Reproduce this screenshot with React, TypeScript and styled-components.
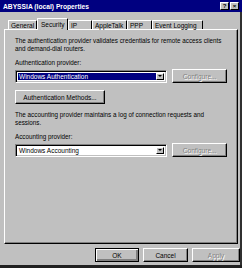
import React from 'react';
import styled, { createGlobalStyle } from 'styled-components';

const GlobalStyle = createGlobalStyle`
  html, body {
    margin: 0;
    padding: 0;
    background: #c0c0c0;
  }
  body {
    font-family: "Liberation Sans", Arial, sans-serif;
  }
`;

const Window = styled.div`
  width: 242px;
  height: 268px;
  box-sizing: border-box;
  background: #c0c0c0;
  display: flex;
  flex-direction: column;
  border-bottom: 3px solid #202020;
  font-size: 6.3px;
  color: #000;
  overflow: hidden;
`;

const TitleBar = styled.div`
  height: 12px;
  flex-shrink: 0;
  background: #000080;
  color: #fff;
  font-size: 6.7px;
  font-weight: bold;
  display: flex;
  align-items: center;
  justify-content: space-between;
  padding: 0 3px 0 3px;
`;

const TitleButtons = styled.div`
  display: flex;
  gap: 1px;
`;

const TitleButton = styled.div`
  width: 9px;
  height: 8px;
  box-sizing: border-box;
  background: #c0c0c0;
  border: 1px solid;
  border-color: #fff #000 #000 #fff;
  color: #000;
  font-size: 6px;
  font-weight: bold;
  line-height: 6px;
  text-align: center;
`;

const Body = styled.div`
  flex: 1;
  display: flex;
  flex-direction: column;
  border-right: 2px solid #303030;
`;

const TabStrip = styled.div`
  display: flex;
  align-items: flex-end;
  height: 11px;
  margin-top: 6px;
  padding-left: 8px;
`;

const Tab = styled.div<{ active?: boolean; w: number }>`
  width: ${p => p.w}px;
  height: ${p => (p.active ? 12 : 9)}px;
  box-sizing: border-box;
  padding-left: ${p => (p.active ? 3 : 2)}px;
  margin-bottom: ${p => (p.active ? -1 : 0)}px;
  border-top: 1px solid #fff;
  border-left: 1px solid #fff;
  border-right: 1px solid #000;
  border-radius: 1px 1px 0 0;
  background: #c0c0c0;
  display: flex;
  align-items: center;
  font-size: 6.5px;
  white-space: nowrap;
  position: relative;
  z-index: ${p => (p.active ? 1 : 0)};
`;

const Panel = styled.div`
  height: 215px;
  box-sizing: border-box;
  margin: 0 2px 0 4px;
  border: 1px solid;
  border-color: #fff #000 #000 #fff;
  box-shadow: inset -1px -1px 0 #808080;
  padding: 7px 10px 0 10px;
  display: flex;
  flex-direction: column;
`;

const Para = styled.p<{ top?: number }>`
  margin: ${p => p.top ?? 0}px 0 0 0;
  line-height: 8px;
  font-size: 6.3px;
  white-space: nowrap;
`;

const Label = styled.div`
  line-height: 8px;
  font-size: 6.3px;
  margin-top: 6px;
`;

const Row = styled.div`
  display: flex;
  align-items: center;
  gap: 5px;
  margin-top: 2px;
`;

const Select = styled.div`
  width: 153px;
  height: 13px;
  box-sizing: border-box;
  background: #fff;
  border: 1px solid;
  border-color: #808080 #fff #fff #808080;
  box-shadow: inset 1px 1px 0 #000, inset -1px -1px 0 #c0c0c0;
  padding: 2px;
  display: flex;
`;

const SelectValue = styled.div<{ selected?: boolean }>`
  flex: 1;
  background: ${p => (p.selected ? '#000080' : 'transparent')};
  color: ${p => (p.selected ? '#fff' : '#000')};
  font-size: 6.5px;
  line-height: 7px;
  padding-left: 1px;
`;

const DropButton = styled.div`
  width: 8px;
  box-sizing: border-box;
  background: #c0c0c0;
  border: 1px solid;
  border-color: #fff #000 #000 #fff;
  display: flex;
  align-items: center;
  justify-content: center;
`;

const Arrow = styled.div`
  width: 0;
  height: 0;
  border-left: 2px solid transparent;
  border-right: 2px solid transparent;
  border-top: 2px solid #000;
`;

const Button = styled.button<{ w: number; disabled?: boolean; isDefault?: boolean }>`
  width: ${p => p.w}px;
  height: 14px;
  box-sizing: border-box;
  background: #c0c0c0;
  border: 1px solid;
  border-color: ${p => (p.isDefault ? '#000' : '#fff #000 #000 #fff')};
  box-shadow: ${p =>
    p.isDefault
      ? 'inset 1px 1px 0 #fff, inset -2px -2px 0 #808080'
      : 'inset -1px -1px 0 #808080'};
  font-family: "Liberation Sans", Arial, sans-serif;
  font-size: 6.5px;
  color: ${p => (p.disabled ? '#808080' : '#000')};
  text-shadow: ${p => (p.disabled ? '1px 1px 0 #fff' : 'none')};
  padding: 0;
  display: flex;
  align-items: center;
  justify-content: center;
`;

const MethodsButton = styled(Button)`
  margin-top: 7px;
`;

const Footer = styled.div`
  display: flex;
  justify-content: flex-end;
  gap: 4px;
  padding: 4px 0 0 0;
`;

const App: React.FC = () => {
  return (
    <>
      <GlobalStyle />
      <Window>
        <TitleBar>
          <span>ABYSSIA (local) Properties</span>
          <TitleButtons>
            <TitleButton>?</TitleButton>
            <TitleButton>×</TitleButton>
          </TitleButtons>
        </TitleBar>
        <Body>
          <TabStrip>
            <Tab w={29}>General</Tab>
            <Tab w={31} active>Security</Tab>
            <Tab w={24}>IP</Tab>
            <Tab w={35}>AppleTalk</Tab>
            <Tab w={25}>PPP</Tab>
            <Tab w={51}>Event Logging</Tab>
          </TabStrip>
          <Panel>
            <Para>
              The authentication provider validates credentials for remote access clients
              <br />
              and demand-dial routers.
            </Para>
            <Label>Authentication provider:</Label>
            <Row>
              <Select>
                <SelectValue selected>Windows Authentication</SelectValue>
                <DropButton>
                  <Arrow />
                </DropButton>
              </Select>
              <Button w={55} disabled>
                Configure...
              </Button>
            </Row>
            <MethodsButton w={90}>Authentication Methods...</MethodsButton>
            <Para top={7}>
              The accounting provider maintains a log of connection requests and
              <br />
              sessions.
            </Para>
            <Label>Accounting provider:</Label>
            <Row>
              <Select>
                <SelectValue>Windows Accounting</SelectValue>
                <DropButton>
                  <Arrow />
                </DropButton>
              </Select>
              <Button w={55} disabled>
                Configure...
              </Button>
            </Row>
          </Panel>
          <Footer>
            <Button w={44} isDefault>
              OK
            </Button>
            <Button w={45}>Cancel</Button>
            <Button w={48} disabled>
              Apply
            </Button>
          </Footer>
        </Body>
      </Window>
    </>
  );
};

export default App;
